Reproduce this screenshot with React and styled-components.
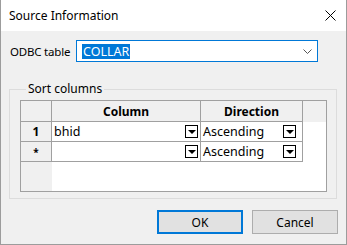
import React from 'react';
import styled, {createGlobalStyle} from 'styled-components';

const GlobalStyle = createGlobalStyle`
  body {
    margin: 0;
    background: #ffffff;
    font-family: "Noto Sans", "Liberation Sans", sans-serif;
  }
`;

const Window = styled.div`
  width: 347px;
  height: 245px;
  box-sizing: border-box;
  border: 1px solid #9c9c9c;
  border-top: none;
  display: flex;
  flex-direction: column;
  background: #f0f0f0;
  color: #000;
`;

const TitleBar = styled.div`
  height: 31px;
  flex: none;
  display: flex;
  align-items: center;
  justify-content: space-between;
  background: #ffffff;
  padding: 0 10px 0 8px;
`;

const Title = styled.span`
  font-size: 12px;
  line-height: 16px;
`;

const Body = styled.div`
  flex: 1;
  display: flex;
  flex-direction: column;
  padding: 9px 9px 10px 8px;
`;

const FieldRow = styled.div`
  display: flex;
  align-items: center;
  gap: 6px;
  height: 22px;
`;

const FieldLabel = styled.span`
  flex: none;
  font-size: 11.5px;
  width: 60px;
  min-width: 0;
  white-space: nowrap;
  letter-spacing: -0.2px;
  margin-left: 1px;
`;

const Combo = styled.div`
  width: 242px;
  height: 22px;
  box-sizing: border-box;
  border: 1px solid #0078d7;
  background: #ffffff;
  display: flex;
  align-items: center;
  justify-content: space-between;
  padding: 0 5px 0 5px;
`;

const Selected = styled.span`
  background: #0078d7;
  color: #ffffff;
  font-size: 12.5px;
  line-height: 15px;
  padding: 0 1px;
`;

const GroupBox = styled.fieldset`
  margin: 19px 0 0 0;
  padding: 3px 9px 6px 10px;
  border: 1px solid #dcdcdc;
  min-width: 0;
`;

const Legend = styled.legend`
  margin-left: 6px;
  padding: 0 2px;
  font-size: 12px;
  line-height: 16px;
`;

const Grid = styled.div`
  width: 307px;
  height: 92px;
  box-sizing: border-box;
  border: 1px solid #a0a0a0;
  background: #ffffff;
  display: grid;
  grid-template-columns: 31px 149px 102px 1fr;
  grid-template-rows: 21px 20px 20px 1fr;
  font-size: 12.5px;
`;

const HeaderCell = styled.div`
  background: #f0f0f0;
  border-right: ${p => (p.$bare ? 'none' : '1px solid #a0a0a0')};
  border-bottom: ${p => (p.$bare ? 'none' : '1px solid #a0a0a0')};
  display: flex;
  align-items: center;
  justify-content: center;
  font-weight: 700;
  font-size: 12px;
`;

const RowHeader = styled.div`
  background: #f0f0f0;
  border-right: ${p => (p.$bare ? 'none' : '1px solid #a0a0a0')};
  border-bottom: ${p => (p.$bare ? 'none' : '1px solid #a0a0a0')};
  display: flex;
  align-items: center;
  justify-content: center;
  font-weight: 700;
  font-size: ${p => (p.$star ? '10px' : '12px')};
`;

const Cell = styled.div`
  border-right: 1px solid #a0a0a0;
  border-bottom: 1px solid #a0a0a0;
  display: flex;
  align-items: center;
  justify-content: space-between;
  padding: 0 ${p => p.$pad}px 0 2px;
  white-space: nowrap;
`;

const Blank = styled.div`
  background: #ffffff;
`;

const DropButton = styled.div`
  width: 13px;
  height: 13px;
  box-sizing: border-box;
  border: 1px solid #000;
  background: #ffffff;
  display: flex;
  align-items: center;
  justify-content: center;
`;

const ButtonRow = styled.div`
  display: flex;
  justify-content: flex-end;
  gap: 9px;
  margin: 11px -1px 0 0;
`;

const DialogButton = styled.div`
  width: 86px;
  height: 24px;
  box-sizing: border-box;
  background: #e1e1e1;
  border: ${p => (p.$primary ? '2px solid #0078d7' : '1px solid #adadad')};
  display: flex;
  align-items: center;
  justify-content: center;
  font-size: 12px;
`;

const Triangle = () => (
  <svg width="8" height="4" viewBox="0 0 8 4">
    <polygon points="0,0 8,0 4,4" fill="#000"/>
  </svg>
);

const rows = [
  {num: '1', column: 'bhid', direction: 'Ascending'},
  {num: '*', column: '', direction: 'Ascending'},
];

const App = () => (
  <>
    <GlobalStyle/>
    <Window>
      <TitleBar>
        <Title>Source Information</Title>
        <svg width="11" height="11" viewBox="0 0 11 11">
          <path d="M0.5 0.5 L10.5 10.5 M10.5 0.5 L0.5 10.5" stroke="#000" strokeWidth="1"/>
        </svg>
      </TitleBar>
      <Body>
        <FieldRow>
          <FieldLabel>ODBC table</FieldLabel>
          <Combo>
            <Selected>COLLAR</Selected>
            <svg width="9" height="5" viewBox="0 0 9 5">
              <path d="M0.5 0.5 L4.5 4.5 L8.5 0.5" stroke="#555" strokeWidth="1" fill="none"/>
            </svg>
          </Combo>
        </FieldRow>
        <GroupBox>
          <Legend>Sort columns</Legend>
          <Grid>
            <HeaderCell/>
            <HeaderCell>Column</HeaderCell>
            <HeaderCell>Direction</HeaderCell>
            <HeaderCell $bare/>
            {rows.map(r => (
              <React.Fragment key={r.num}>
                <RowHeader $star={r.num === '*'}>{r.num}</RowHeader>
                <Cell $pad={2}>
                  <span>{r.column}</span>
                  <DropButton><Triangle/></DropButton>
                </Cell>
                <Cell $pad={6}>
                  <span>{r.direction}</span>
                  <DropButton><Triangle/></DropButton>
                </Cell>
                <Blank/>
              </React.Fragment>
            ))}
            <RowHeader $bare/>
            <Blank/>
            <Blank/>
            <Blank/>
          </Grid>
        </GroupBox>
        <ButtonRow>
          <DialogButton $primary>OK</DialogButton>
          <DialogButton>Cancel</DialogButton>
        </ButtonRow>
      </Body>
    </Window>
  </>
);

export default App;
